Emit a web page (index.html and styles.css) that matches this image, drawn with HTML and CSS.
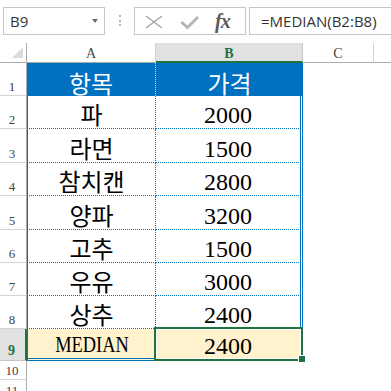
FILE: index.html
```html
<!DOCTYPE html>
<html>
<head>
<meta charset="utf-8">
<link rel="stylesheet" href="styles.css">
</head>
<body>
<div class="fbar">
  <div class="namebox"><span>B9</span><span class="caret"></span></div>
  <div class="grip"><i></i><i></i><i></i></div>
  <div class="fxbox">
    <svg class="ic-x" width="18" height="14" viewBox="0 0 18 14"><path d="M1 1L17 13M17 1L1 13" stroke="#a6a6a6" stroke-width="1.4" fill="none"/></svg>
    <svg class="ic-ok" width="19" height="14" viewBox="0 0 19 14"><path d="M1.5 7L7.5 12.5L18 2" stroke="#b5b5b5" stroke-width="3" fill="none"/></svg>
    <span class="fx">fx</span>
  </div>
  <div class="formula">=MEDIAN(B2:B8)</div>
</div>
<div class="sheet">
  <div class="corner"><svg width="11" height="11" viewBox="0 0 11 11"><path d="M11 0V11H0Z" fill="#dcdcdc"/></svg></div>
  <div class="ch">A</div>
  <div class="ch sel">B</div>
  <div class="ch">C</div>
  <div class="ch last"></div>

  <div class="rh">1</div><div class="c a head kr">항목</div><div class="c b head kr">가격</div><div class="c"></div><div class="c"></div>
  <div class="rh">2</div><div class="c a body kr">파</div><div class="c b body num">2000</div><div class="c"></div><div class="c"></div>
  <div class="rh">3</div><div class="c a body kr">라면</div><div class="c b body num">1500</div><div class="c"></div><div class="c"></div>
  <div class="rh">4</div><div class="c a body kr">참치캔</div><div class="c b body num">2800</div><div class="c"></div><div class="c"></div>
  <div class="rh">5</div><div class="c a body kr">양파</div><div class="c b body num">3200</div><div class="c"></div><div class="c"></div>
  <div class="rh">6</div><div class="c a body kr">고추</div><div class="c b body num">1500</div><div class="c"></div><div class="c"></div>
  <div class="rh">7</div><div class="c a body kr">우유</div><div class="c b body num">3000</div><div class="c"></div><div class="c"></div>
  <div class="rh">8</div><div class="c a body kr">상추</div><div class="c b body num">2400</div><div class="c"></div><div class="c"></div>
  <div class="rh rsel">9</div><div class="c a total"><span class="med">MEDIAN</span></div><div class="c b total num">2400</div><div class="c"></div><div class="c"></div>
  <div class="rh">10</div><div class="c"></div><div class="c"></div><div class="c"></div><div class="c"></div>
  <div class="rh">11</div><div class="c"></div><div class="c"></div><div class="c"></div><div class="c"></div>

  <div class="selection"></div>
  <div class="handle"></div>
</div>
</body>
</html>
```
FILE: styles.css
```css
* { box-sizing: border-box; margin: 0; padding: 0; }
html, body { width: 391px; height: 391px; overflow: hidden; background: #fff; }
body { font-family: "Liberation Serif", "Times New Roman", serif; color: #000; }

.fbar { display: flex; align-items: flex-start; height: 43px; padding: 7px 0 0 3px; overflow: hidden; }
.fbar > * { flex-shrink: 0; }
.namebox {
  width: 102px; height: 28px; border: 1px solid #c6c6c6;
  display: flex; align-items: center; justify-content: space-between;
  padding: 0 6px 0 6px;
  font: 15px "Open Sans", sans-serif; color: #333;
}
.caret { width: 0; height: 0; border-left: 3.5px solid transparent; border-right: 3.5px solid transparent; border-top: 4px solid #6d6d6d; }
.grip { width: 29px; height: 28px; display: flex; flex-direction: column; align-items: center; padding-top: 8px; gap: 2.5px; }
.grip i { display: block; width: 2px; height: 2px; background: #b4b4b4; }
.fxbox {
  width: 112px; height: 28px; border: 1px solid #c6c6c6;
  display: flex; align-items: center; padding-left: 10px;
}
.ic-x { margin-top: 1px; }
.ic-ok { margin-left: 17px; margin-top: 1px; }
.fx { margin-left: 16px; font: italic bold 20px "Liberation Serif", serif; color: #5a5a5a; letter-spacing: -1px; }
.formula {
  margin-left: 3px; width: 160px; height: 28px;
  border: 1px solid #c6c6c6; border-right: none;
  padding-left: 11px; display: flex; align-items: center;
  font: 15px "Open Sans", sans-serif; color: #333; white-space: nowrap;
}

.sheet {
  position: relative;
  display: grid;
  grid-template-columns: 27px 129px 147px 71px 1fr;
  grid-template-rows: 20px 33px 33px 34px 33px 34px 33px 33px 33px 32px 19px 20px;
}
.corner { border-right: 1px solid #ababab; border-bottom: 1px solid #ababab; display: flex; align-items: flex-end; justify-content: flex-end; padding: 0 3px 4px 0; }
.ch {
  border-right: 1px solid #d4d4d4; border-bottom: 1px solid #ababab;
  display: flex; align-items: center; justify-content: center; padding-top: 3px;
  font-size: 14px; color: #444;
}
.ch.sel { background: #e1e1e1; color: #217346; font-weight: bold; border-bottom: 2px solid #217346; border-right-color: #c6c6c6; }
.ch.last { border-right: none; }
.rh {
  border-right: 1px solid #ababab; border-bottom: 1px solid #d4d4d4;
  display: flex; align-items: flex-end; justify-content: center; padding: 0 2px 1px 0;
  font-size: 13px; line-height: 15px; color: #444;
}
.rh.rsel { background: #e1e1e1; color: #217346; font-weight: bold; border-right: 2px solid #217346; border-bottom-color: #c6c6c6; font-size: 14px; padding-bottom: 2px; }

.c { display: flex; align-items: flex-end; justify-content: center; }
.kr { font-family: "Noto Sans CJK KR", sans-serif; font-size: 24px; line-height: 24px; padding-bottom: 2px; }
.num { font-family: "Liberation Serif", "Times New Roman", serif; font-size: 24px; line-height: 24px; padding-bottom: 1px; }
.head { background: #0070c0; color: #fff; padding-bottom: 1px; }
.a.head { border-right: 1px dotted rgba(255,255,255,0.75); }
.a.body { border-left: 1px solid #0070c0; border-right: 1px dotted #0070c0; border-bottom: 1px dotted #0070c0; }
.b.body { border-right: 3px double #0070c0; border-bottom: 1px dotted #0070c0; }
.total { background: #fff2cc; border-bottom: 3px double #0070c0; }
.a.total { border-left: 1px solid #0070c0; border-right: 1px dotted #0070c0; padding-bottom: 2px; }
.b.total { border-right: 3px double #0070c0; padding-bottom: 0; }
.med { display: inline-block; font-family: "Liberation Serif", serif; font-size: 23px; line-height: 23px; transform: scaleX(0.8); }

.selection {
  position: absolute; left: 154px; top: 284px; width: 149px; height: 34px;
  border: 2px solid #217346; box-shadow: inset 0 0 0 1px #fff;
}
.handle {
  position: absolute; left: 299px; top: 313px; width: 6px; height: 6px;
  background: #217346; box-shadow: 0 0 0 1px #fff;
}
```
